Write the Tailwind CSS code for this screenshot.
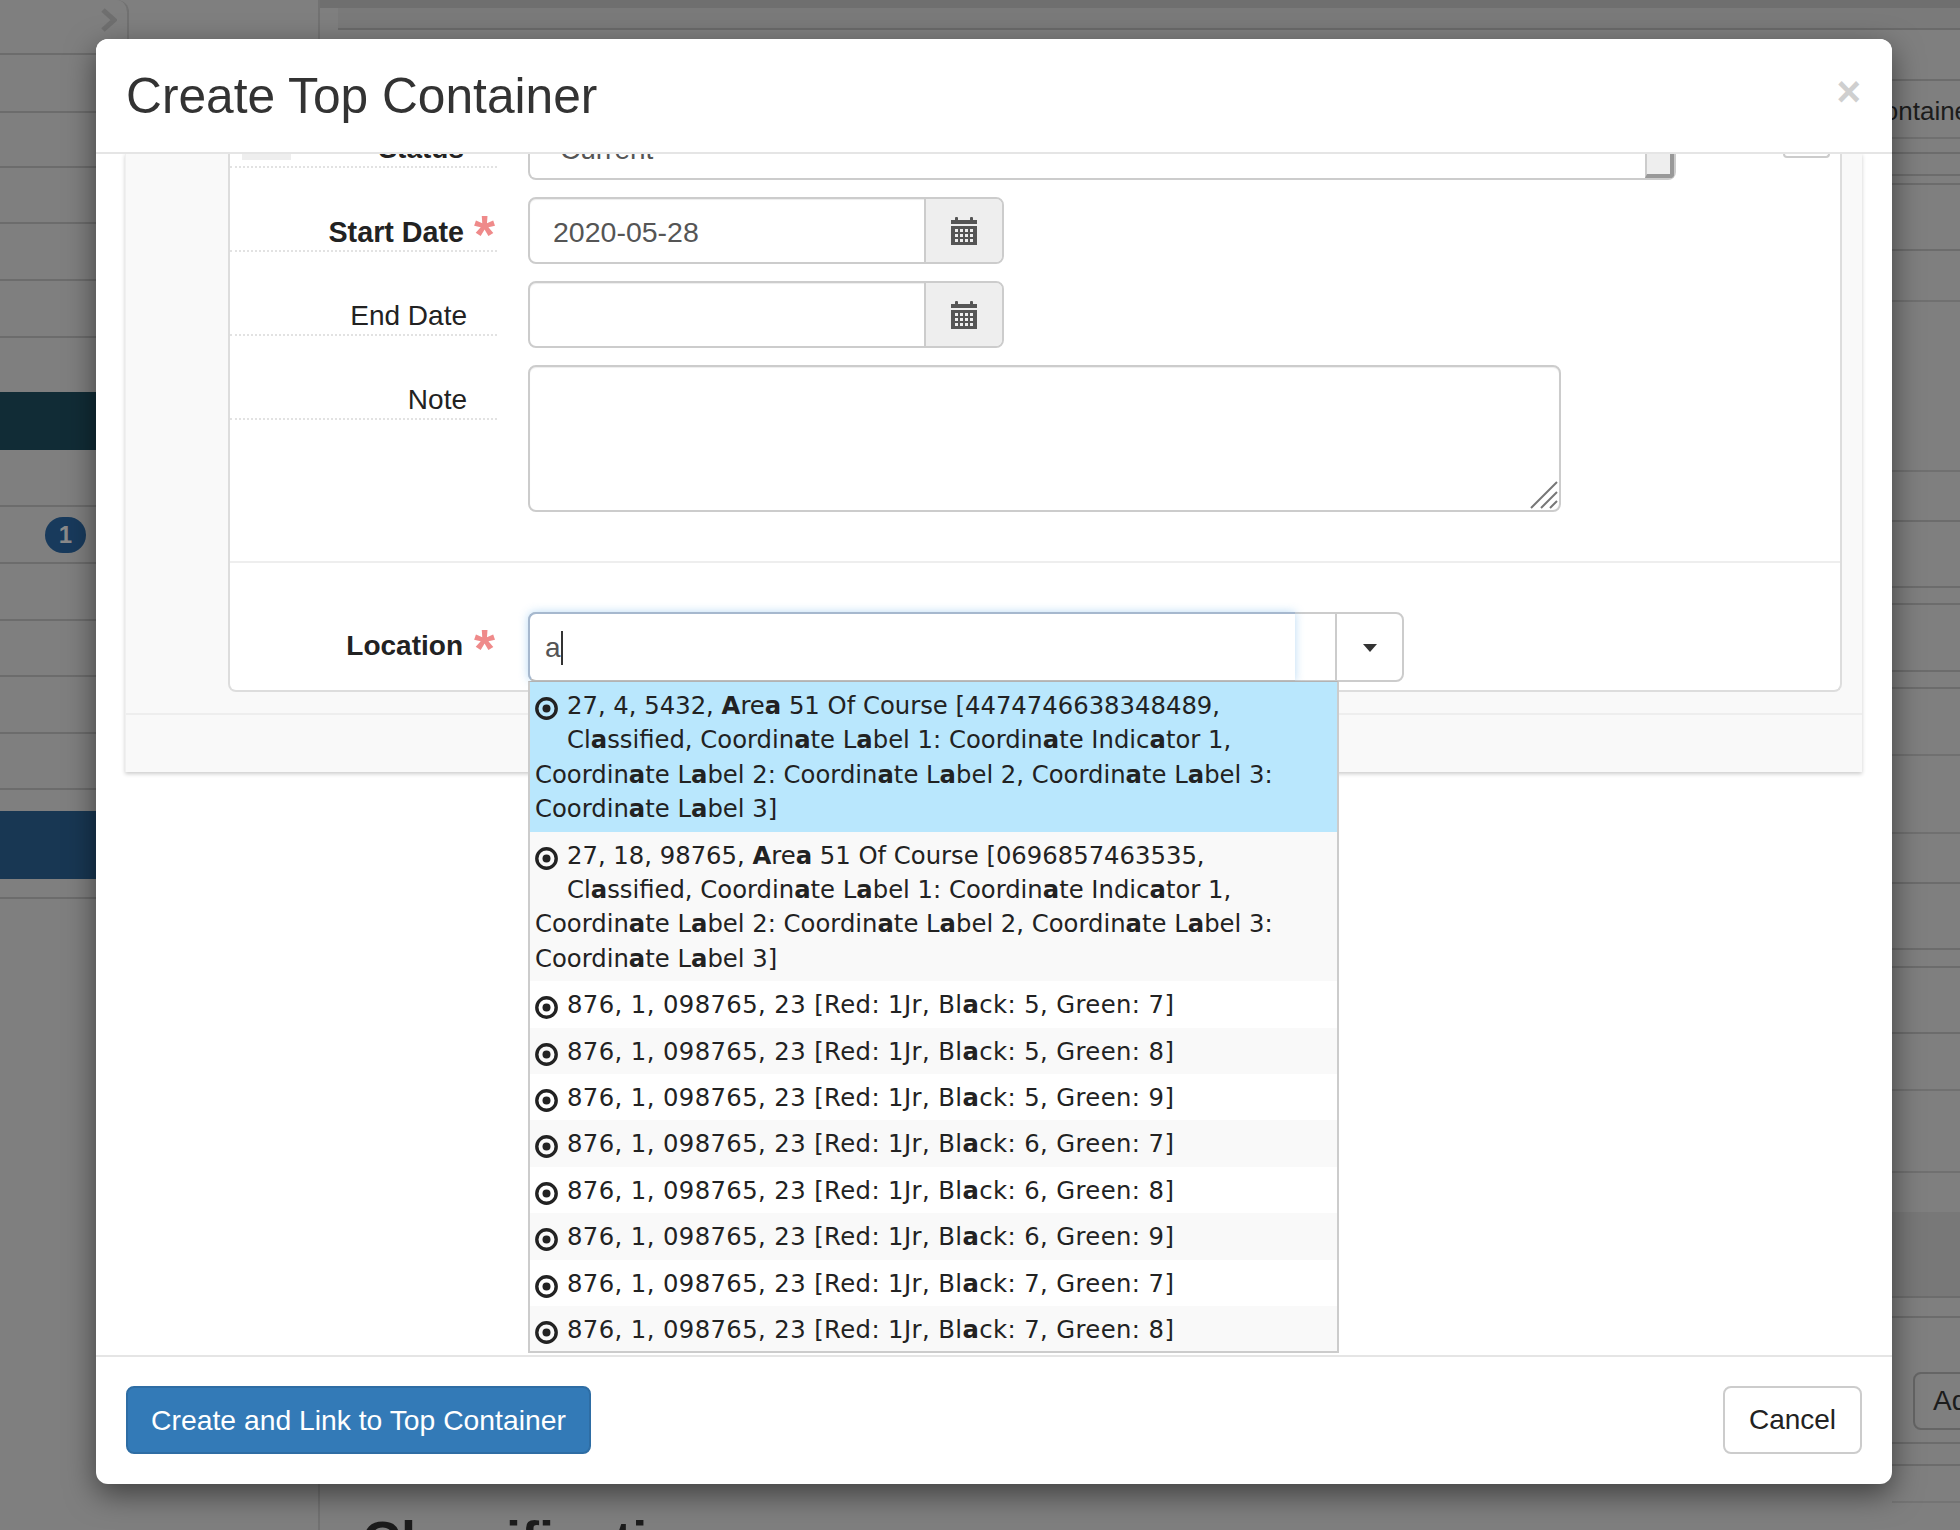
<!doctype html>
<html lang="en">
<head>
<meta charset="utf-8">
<title>Create Top Container</title>
<script src="https://cdn.jsdelivr.net/npm/@tailwindcss/browser@4"></script>
</head>
<body class="m-0">
<div class="relative w-[1960px] h-[1530px] overflow-hidden flex bg-[#7f7f7f] font-['Liberation_Sans',Arial,sans-serif] text-[28px] text-[#222]">

  <!-- dimmed page: sidebar -->
  <aside class="w-[320px] shrink-0 border-r-2 border-[#727272] flex flex-col">
    <div class="h-[55px] border-b-2 border-[#6c6c6c]">
      <div class="w-[129px] h-[39px] border-r-2 border-[#717171] rounded-tr-xl flex justify-end items-center pr-[10px]">
        <svg width="16" height="24" viewBox="0 0 16 24" fill="none" stroke="#6f6f6f" stroke-width="5"><path d="M2 2l11 10L2 22"/></svg>
      </div>
    </div>
    <div class="h-[58px] border-b-2 border-[#6c6c6c]"></div>
    <div class="h-[55px] border-b-2 border-[#6c6c6c]"></div>
    <div class="h-[56px] border-b-2 border-[#6c6c6c]"></div>
    <div class="h-[57px] border-b-2 border-[#6c6c6c]"></div>
    <div class="h-[57px] border-b-2 border-[#6c6c6c]"></div>
    <div class="h-[54px]"></div>
    <div class="h-[58px] bg-[#112c36]"></div>
    <div class="h-[57px] border-b-2 border-[#6c6c6c]"></div>
    <div class="h-[57px] border-b-2 border-[#6c6c6c] flex items-center pl-[45px]">
      <span class="w-[41px] h-[36px] rounded-full bg-[#183a5c] text-[#8a8a8a] text-[24px] leading-[36px] font-bold text-center">1</span>
    </div>
    <div class="h-[57px] border-b-2 border-[#6c6c6c]"></div>
    <div class="h-[56px] border-b-2 border-[#6c6c6c]"></div>
    <div class="h-[57px] border-b-2 border-[#6c6c6c]"></div>
    <div class="h-[56px] border-b-2 border-[#6c6c6c]"></div>
    <div class="h-[21px]"></div>
    <div class="h-[68px] bg-[#183753]"></div>
    <div class="h-[20px] border-b-2 border-[#6c6c6c]"></div>
  </aside>

  <!-- dimmed page: main -->
  <main class="flex-1 flex flex-col justify-between pl-[18px]">
    <div>
      <div class="h-[8px] -ml-[18px] bg-[#6f6f6f]"></div>
      <div class="h-[22px] bg-[#7a7a7a] border-b-2 border-[#6a6a6a]"></div>
    </div>
    <h2 class="m-0 -mb-[42px] pl-[24px] font-bold text-[54px] leading-[64px] text-[#1c1c1c]">Classification</h2>
  </main>

  <!-- dimmed page: right column -->
  <div class="w-[68px] shrink-0 flex flex-col overflow-visible">
    <div class="h-[8px] shrink-0 bg-[#6f6f6f]"></div>
    <div class="h-[22px] shrink-0 bg-[#7a7a7a] border-b-2 border-[#6a6a6a]"></div>
    <div class="h-[51px] shrink-0 border-b-2 border-[#6c6c6c]"></div>
    <div class="h-[58px] shrink-0 border-b-2 border-[#707070] overflow-visible flex items-center"><span class="-ml-[27px] mt-[4px] whitespace-nowrap text-[26px] text-[#1c1c1c]">Container</span></div>
    <div class="h-[15px] border-b-2 border-[#6c6c6c]"></div>
    <div class="h-[22px] border-b-2 border-[#6c6c6c]"></div>
    <div class="h-[9px] border-b-2 border-[#6c6c6c]"></div>
    <div class="h-[66px] border-b-2 border-[#6c6c6c]"></div>
    <div class="h-[51px] border-b-2 border-[#707070]"></div>
    <div class="h-[170px] border-b-2 border-[#707070]"></div>
    <div class="h-[50px] border-b-2 border-[#6c6c6c]"></div>
    <div class="h-[66px] border-b-2 border-[#6c6c6c]"></div>
    <div class="h-[17px] border-b-2 border-[#6c6c6c]"></div>
    <div class="h-[67px] border-b-2 border-[#6c6c6c]"></div>
    <div class="h-[17px] border-b-2 border-[#6c6c6c]"></div>
    <div class="h-[67px] border-b-2 border-[#707070]"></div>
    <div class="h-[78px] border-b-2 border-[#707070]"></div>
    <div class="h-[50px] border-b-2 border-[#6c6c6c]"></div>
    <div class="h-[66px] border-b-2 border-[#6c6c6c]"></div>
    <div class="h-[18px] border-b-2 border-[#6c6c6c]"></div>
    <div class="h-[66px] border-b-2 border-[#6c6c6c]"></div>
    <div class="h-[57px] border-b-2 border-[#707070]"></div>
    <div class="h-[82px] border-b-2 border-[#707070]"></div>
    <div class="h-[39px]"></div>
    <div class="h-[86px] bg-[#787878] border-b-2 border-[#6c6c6c]"></div>
    <div class="h-[20px] border-b-2 border-[#6c6c6c]"></div>
    <div class="h-[126px] border-b-2 border-[#6c6c6c] pt-[54px] pl-[21px]">
      <div class="w-[80px] h-[58px] border-2 border-[#656565] rounded-l-lg pl-[18px] leading-[54px] overflow-hidden text-[#1c1c1c]">Add</div>
    </div>
    <div class="h-[22px] border-b-2 border-[#6c6c6c]"></div>
    <div class="h-[37px] border-b-2 border-[#747474]"></div>
  </div>

  <!-- modal -->
  <section class="absolute left-[96px] top-[39px] w-[1796px] h-[1445px] bg-white rounded-xl shadow-[0_10px_30px_rgba(0,0,0,0.5)] flex flex-col overflow-visible z-10">

    <header class="h-[115px] shrink-0 border-b-2 border-[#e5e5e5] pl-[30px] pr-[31px] flex items-start justify-between relative z-20 bg-white rounded-t-xl">
      <h1 class="m-0 mt-[27px] text-[49.7px] leading-[60px] font-normal text-[#333]">Create Top Container</h1>
      <span class="mt-[29px] font-bold text-[42px] leading-[48px] text-[#cfcfcf]">×</span>
    </header>

    <div class="h-[1201px] shrink-0 pl-[29px] relative">
      <!-- panel -->
      <div class="-mt-px w-[1737px] h-[619px] bg-[#f9f9f9] pl-[102px] shadow-[0_2px_4px_rgba(0,0,0,0.2)] border-l border-[#f0f0f0] flex flex-col">
        <div class="w-[1614px] h-[539px] shrink-0 bg-white border-x-2 border-b-2 border-[#dddddd] rounded-b-lg flex flex-col">

          <!-- status row, scrolled under the header -->
          <div class="h-[44px] shrink-0 flex items-start overflow-hidden">
            <div class="w-[267px] h-[15px] shrink-0 border-b-2 border-dotted border-[#e2e2e2] flex justify-between items-end pr-[33px] overflow-visible">
              <span class="ml-[12px] w-[49px] h-[7px] self-start bg-[#eeeeee]"></span>
              <span class="font-bold leading-[34px]">Status</span>
            </div>
            <div class="ml-[31px] w-[1148px] h-[27px] shrink-0 border-x-2 border-b-2 border-[#cccccc] rounded-b-lg flex justify-between items-end">
              <span class="pl-[30px] text-[#555] leading-[34px] translate-y-[-11px]">Current</span>
              <span class="w-[29px] h-[25px] bg-[#eeeeee] border-l-2 border-l-[#cccccc] border-r-[4px] border-b-[4px] border-r-[#999999] border-b-[#999999] rounded-br"></span>
            </div>
            <div class="ml-[107px] w-[47px] h-[5px] shrink-0 border-x-2 border-b-2 border-[#cccccc] rounded-b"></div>
          </div>

          <!-- start date -->
          <div class="h-[84px] shrink-0 flex items-start">
            <div class="w-[267px] h-[55px] shrink-0 border-b-2 border-dotted border-[#e2e2e2] flex justify-end items-start pr-[2px]">
              <span class="font-bold text-[28.7px] leading-[34px] mt-[18px]">Start Date</span>
              <span class="ml-[10px] w-[21px] mt-[10px] text-[#ef8a8a] text-[54px] leading-[54px] font-bold">*</span>
            </div>
            <div class="ml-[31px] w-[476px] h-[67px] shrink-0 flex border-2 border-[#cccccc] rounded-lg overflow-hidden shadow-[inset_0_1px_1px_rgba(0,0,0,0.075)]">
              <div class="flex-1 pl-[23px] pt-[2px] text-[28.5px] leading-[63px] text-[#555]">2020-05-28</div>
              <div class="w-[78px] border-l-2 border-[#cccccc] bg-[#eeeeee] flex items-center justify-center">
                <svg width="26" height="28" viewBox="0 0 26 28"><path fill="#555" d="M0 3h4V1a1 1 0 0 1 1-1h1a1 1 0 0 1 1 1v2h12V1a1 1 0 0 1 1-1h1a1 1 0 0 1 1 1v2h4v4H0z"/><path fill="#555" fill-rule="evenodd" d="M0 9h26v19H0zM4 12v3h3v-3zM9 12v3h3v-3zM14 12v3h3v-3zM19 12v3h3v-3zM4 17v3h3v-3zM9 17v3h3v-3zM14 17v3h3v-3zM19 17v3h3v-3zM4 22v3h3v-3zM9 22v3h3v-3zM14 22v3h3v-3zM19 22v3h3v-3z"/></svg>
              </div>
            </div>
          </div>

          <!-- end date -->
          <div class="h-[84px] shrink-0 flex items-start">
            <div class="w-[267px] h-[55px] shrink-0 border-b-2 border-dotted border-[#e2e2e2] flex justify-end items-start pr-[30px]">
              <span class="leading-[34px] mt-[18px]">End Date</span>
            </div>
            <div class="ml-[31px] w-[476px] h-[67px] shrink-0 flex border-2 border-[#cccccc] rounded-lg overflow-hidden shadow-[inset_0_1px_1px_rgba(0,0,0,0.075)]">
              <div class="flex-1"></div>
              <div class="w-[78px] border-l-2 border-[#cccccc] bg-[#eeeeee] flex items-center justify-center">
                <svg width="26" height="28" viewBox="0 0 26 28"><path fill="#555" d="M0 3h4V1a1 1 0 0 1 1-1h1a1 1 0 0 1 1 1v2h12V1a1 1 0 0 1 1-1h1a1 1 0 0 1 1 1v2h4v4H0z"/><path fill="#555" fill-rule="evenodd" d="M0 9h26v19H0zM4 12v3h3v-3zM9 12v3h3v-3zM14 12v3h3v-3zM19 12v3h3v-3zM4 17v3h3v-3zM9 17v3h3v-3zM14 17v3h3v-3zM19 17v3h3v-3zM4 22v3h3v-3zM9 22v3h3v-3zM14 22v3h3v-3zM19 22v3h3v-3z"/></svg>
              </div>
            </div>
          </div>

          <!-- note -->
          <div class="h-[198px] shrink-0 flex items-start border-b-2 border-[#eeeeee]">
            <div class="w-[267px] h-[55px] shrink-0 border-b-2 border-dotted border-[#e2e2e2] flex justify-end items-start pr-[30px]">
              <span class="leading-[34px] mt-[18px]">Note</span>
            </div>
            <div class="relative ml-[31px] w-[1033px] h-[147px] shrink-0 border-2 border-[#cccccc] rounded-lg shadow-[inset_0_1px_1px_rgba(0,0,0,0.075)]">
              <svg class="absolute right-[1px] bottom-[1px]" width="28" height="28" viewBox="0 0 28 28" fill="none" stroke="#777" stroke-width="2"><path d="M1 27 27 1M11 27 27 11M20 27l7-7"/></svg>
            </div>
          </div>

          <!-- location -->
          <div class="flex items-start pt-[49px]">
            <div class="w-[267px] shrink-0 flex justify-end items-start pr-[2px]">
              <span class="font-bold leading-[34px] mt-[17px]">Location</span>
              <span class="ml-[11px] w-[21px] mt-[9px] text-[#ef8a8a] text-[54px] leading-[54px] font-bold">*</span>
            </div>
            <div class="relative ml-[31px] w-[876px] h-[70px] shrink-0 border-2 border-[#cccccc] rounded-lg flex">
              <div class="-m-[2px] w-[767px] h-[70px] shrink-0 border-2 border-r-0 border-[#a6b8ce] border-b-[#bbbbbb] rounded-l-lg bg-white shadow-[0_0_10px_rgba(102,175,233,0.45)] pl-[15px] pt-[2px] flex items-center">
                <span class="text-[#555] leading-[34px]">a</span><span class="w-[2px] h-[34px] bg-[#333]"></span>
              </div>
              <div class="w-[42px] shrink-0"></div>
              <div class="w-[67px] shrink-0 border-l-2 border-[#cccccc] flex items-center justify-center">
                <svg width="14" height="9" viewBox="0 0 14 9"><path fill="#333" d="M0 1h14L7 9z"/></svg>
              </div>

              <!-- typeahead menu -->
              <ul class="absolute left-[-2px] top-[67px] z-10 w-[811px] h-[672px] m-0 p-0 list-none bg-white border-x-2 border-b-2 border-t border-[#cccccc] border-t-[#b3b3b3] font-['DejaVu_Sans',Verdana,sans-serif] text-[24.3px] leading-[34.4px] text-[#222] overflow-hidden">
                <li class="bg-[#b9e7fd] pt-[7px] pb-[5px] pl-[5px] whitespace-nowrap">
                  <div><svg class="inline-block align-[-6px] mr-[9px]" width="23" height="23" viewBox="0 0 23 23"><circle cx="11.5" cy="11.5" r="9.7" fill="none" stroke="#222" stroke-width="3.4"/><circle cx="11.5" cy="11.5" r="4" fill="#222"/></svg>27, 4, 5432, <b>A</b>re<b>a</b> 51 Of Course [4474746638348489,</div>
                  <div class="pl-[32px]">Cl<b>a</b>ssified, Coordin<b>a</b>te L<b>a</b>bel 1: Coordin<b>a</b>te Indic<b>a</b>tor 1,</div>
                  <div>Coordin<b>a</b>te L<b>a</b>bel 2: Coordin<b>a</b>te L<b>a</b>bel 2, Coordin<b>a</b>te L<b>a</b>bel 3:</div>
                  <div>Coordin<b>a</b>te L<b>a</b>bel 3]</div>
                </li>
                <li class="bg-[#f9f9f9] pt-[7px] pb-[5px] pl-[5px] whitespace-nowrap">
                  <div><svg class="inline-block align-[-6px] mr-[9px]" width="23" height="23" viewBox="0 0 23 23"><circle cx="11.5" cy="11.5" r="9.7" fill="none" stroke="#222" stroke-width="3.4"/><circle cx="11.5" cy="11.5" r="4" fill="#222"/></svg>27, 18, 98765, <b>A</b>re<b>a</b> 51 Of Course [0696857463535,</div>
                  <div class="pl-[32px]">Cl<b>a</b>ssified, Coordin<b>a</b>te L<b>a</b>bel 1: Coordin<b>a</b>te Indic<b>a</b>tor 1,</div>
                  <div>Coordin<b>a</b>te L<b>a</b>bel 2: Coordin<b>a</b>te L<b>a</b>bel 2, Coordin<b>a</b>te L<b>a</b>bel 3:</div>
                  <div>Coordin<b>a</b>te L<b>a</b>bel 3]</div>
                </li>
                <li class="bg-white pt-[7px] pb-[5px] pl-[5px] whitespace-nowrap tracking-[0.4px]"><svg class="inline-block align-[-6px] mr-[9px]" width="23" height="23" viewBox="0 0 23 23"><circle cx="11.5" cy="11.5" r="9.7" fill="none" stroke="#222" stroke-width="3.4"/><circle cx="11.5" cy="11.5" r="4" fill="#222"/></svg>876, 1, 098765, 23 [Red: 1Jr, Bl<b>a</b>ck: 5, Green: 7]</li>
                <li class="bg-[#f9f9f9] pt-[7px] pb-[5px] pl-[5px] whitespace-nowrap tracking-[0.4px]"><svg class="inline-block align-[-6px] mr-[9px]" width="23" height="23" viewBox="0 0 23 23"><circle cx="11.5" cy="11.5" r="9.7" fill="none" stroke="#222" stroke-width="3.4"/><circle cx="11.5" cy="11.5" r="4" fill="#222"/></svg>876, 1, 098765, 23 [Red: 1Jr, Bl<b>a</b>ck: 5, Green: 8]</li>
                <li class="bg-white pt-[7px] pb-[5px] pl-[5px] whitespace-nowrap tracking-[0.4px]"><svg class="inline-block align-[-6px] mr-[9px]" width="23" height="23" viewBox="0 0 23 23"><circle cx="11.5" cy="11.5" r="9.7" fill="none" stroke="#222" stroke-width="3.4"/><circle cx="11.5" cy="11.5" r="4" fill="#222"/></svg>876, 1, 098765, 23 [Red: 1Jr, Bl<b>a</b>ck: 5, Green: 9]</li>
                <li class="bg-[#f9f9f9] pt-[7px] pb-[5px] pl-[5px] whitespace-nowrap tracking-[0.4px]"><svg class="inline-block align-[-6px] mr-[9px]" width="23" height="23" viewBox="0 0 23 23"><circle cx="11.5" cy="11.5" r="9.7" fill="none" stroke="#222" stroke-width="3.4"/><circle cx="11.5" cy="11.5" r="4" fill="#222"/></svg>876, 1, 098765, 23 [Red: 1Jr, Bl<b>a</b>ck: 6, Green: 7]</li>
                <li class="bg-white pt-[7px] pb-[5px] pl-[5px] whitespace-nowrap tracking-[0.4px]"><svg class="inline-block align-[-6px] mr-[9px]" width="23" height="23" viewBox="0 0 23 23"><circle cx="11.5" cy="11.5" r="9.7" fill="none" stroke="#222" stroke-width="3.4"/><circle cx="11.5" cy="11.5" r="4" fill="#222"/></svg>876, 1, 098765, 23 [Red: 1Jr, Bl<b>a</b>ck: 6, Green: 8]</li>
                <li class="bg-[#f9f9f9] pt-[7px] pb-[5px] pl-[5px] whitespace-nowrap tracking-[0.4px]"><svg class="inline-block align-[-6px] mr-[9px]" width="23" height="23" viewBox="0 0 23 23"><circle cx="11.5" cy="11.5" r="9.7" fill="none" stroke="#222" stroke-width="3.4"/><circle cx="11.5" cy="11.5" r="4" fill="#222"/></svg>876, 1, 098765, 23 [Red: 1Jr, Bl<b>a</b>ck: 6, Green: 9]</li>
                <li class="bg-white pt-[7px] pb-[5px] pl-[5px] whitespace-nowrap tracking-[0.4px]"><svg class="inline-block align-[-6px] mr-[9px]" width="23" height="23" viewBox="0 0 23 23"><circle cx="11.5" cy="11.5" r="9.7" fill="none" stroke="#222" stroke-width="3.4"/><circle cx="11.5" cy="11.5" r="4" fill="#222"/></svg>876, 1, 098765, 23 [Red: 1Jr, Bl<b>a</b>ck: 7, Green: 7]</li>
                <li class="bg-[#f9f9f9] pt-[7px] pb-[5px] pl-[5px] whitespace-nowrap tracking-[0.4px]"><svg class="inline-block align-[-6px] mr-[9px]" width="23" height="23" viewBox="0 0 23 23"><circle cx="11.5" cy="11.5" r="9.7" fill="none" stroke="#222" stroke-width="3.4"/><circle cx="11.5" cy="11.5" r="4" fill="#222"/></svg>876, 1, 098765, 23 [Red: 1Jr, Bl<b>a</b>ck: 7, Green: 8]</li>
              </ul>
            </div>
          </div>
        </div>
        <div class="mt-[21px] h-[59px] -ml-[102px] border-t-2 border-[#eeeeee]"></div>
      </div>
    </div>

    <footer class="h-[129px] shrink-0 border-t-2 border-[#e5e5e5] pt-[29px] pl-[30px] pr-[30px] flex items-start justify-between">
      <button class="w-[465px] h-[68px] bg-[#337ab7] border-2 border-[#2e6da4] rounded-lg text-white text-[28.3px] leading-[34px]">Create and Link to Top Container</button>
      <button class="w-[139px] h-[68px] bg-white border-2 border-[#cccccc] rounded-lg text-[#222] text-[28px] leading-[34px]">Cancel</button>
    </footer>
  </section>
</div>
</body>
</html>
